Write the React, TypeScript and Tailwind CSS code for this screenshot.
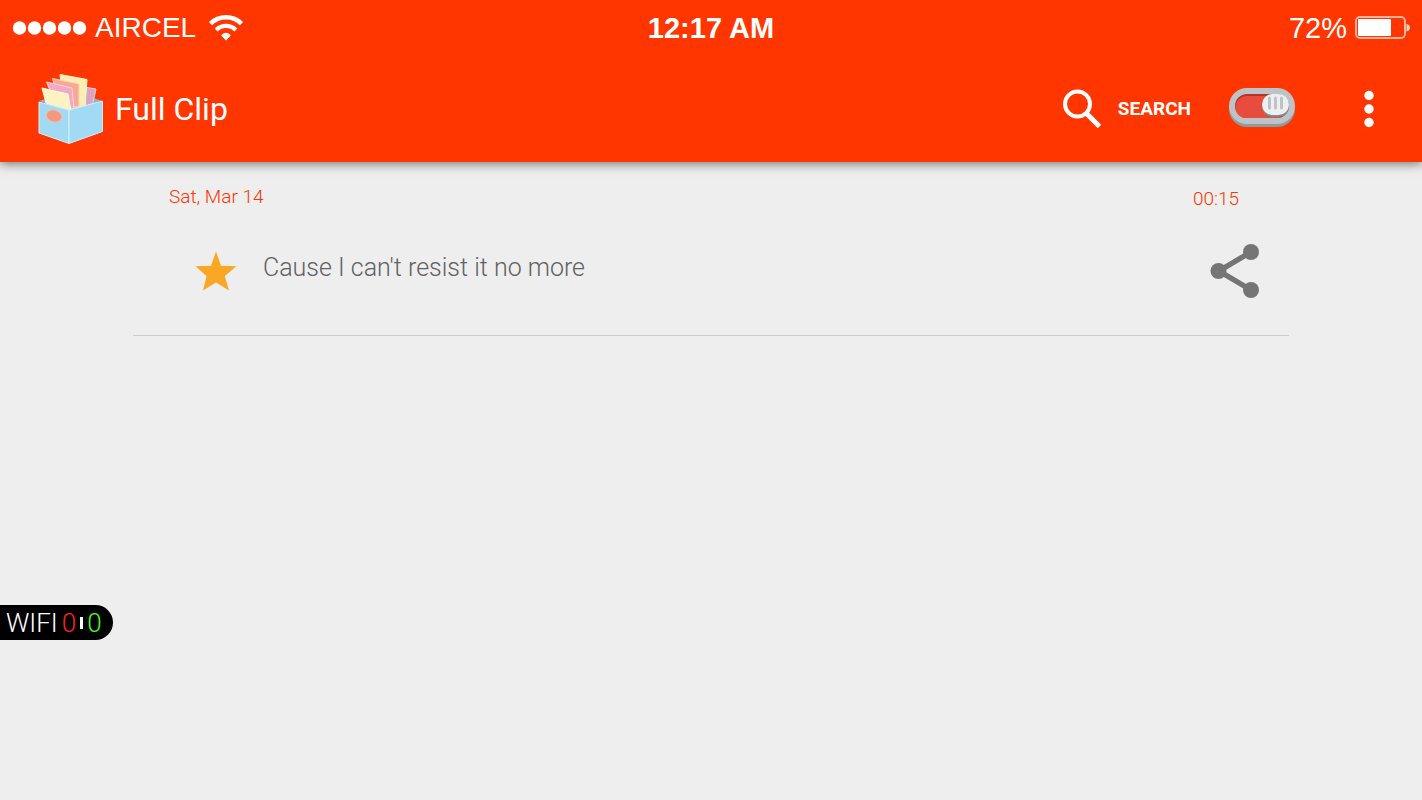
import React from 'react';

const clips = [
  { id: 1, date: 'Sat, Mar 14', time: '00:15', text: "Cause I can't resist it no more" },
];

const WifiIcon = () => (
  <svg width="36" height="28" viewBox="0 0 36 28" fill="none" aria-hidden="true">
    <path d="M2.500 9.600C11 1.200 25 1.200 33.500 9.600" stroke="#fff" strokeWidth="4.600" />
    <path d="M8.200 16C13.600 10.600 22.400 10.600 27.800 16" stroke="#fff" strokeWidth="4.200" />
    <path d="M18 26.500L13.200 21.500C15.600 17.800 20.400 17.800 22.800 21.500Z" fill="#fff" />
  </svg>
);

const BatteryIcon = () => (
  <svg width="55" height="24" viewBox="0 0 55 24" aria-hidden="true">
    <rect x="1" y="1" width="49" height="21" rx="4" fill="none" stroke="#ffb39e" strokeWidth="2" />
    <rect x="3" y="3" width="33" height="17" rx="1" fill="#fff" />
    <path d="M51.500 8C56 8.500 56 15 51.500 15.500Z" fill="#ffd9ce" />
  </svg>
);

const BoxLogo = () => (
  <svg width="66" height="72" viewBox="0 0 66 72" aria-hidden="true" strokeLinejoin="round">
    <path d="M1 28L36 18L64 28L31 37Z" fill="#7fb9cf" />
    <path d="M46 14L58 16L54 34L44 36Z" fill="#dba3bf" stroke="#f0cfdc" strokeWidth="1" />
    <path d="M22 1.500L49 6.500L47 34L26 34Z" fill="#fbeeae" stroke="#fff8dc" strokeWidth="1" />
    <path d="M14.500 5.500L41 11L41 34L22 32Z" fill="#f6ab91" stroke="#fbd3c2" strokeWidth="1" />
    <path d="M8.500 9L34 15L36 36L18 32Z" fill="#f3a9c6" stroke="#fbd5e2" strokeWidth="1" />
    <path d="M4 15L30 21L33 38L8 30Z" fill="#fcf3c0" stroke="#fffbe6" strokeWidth="1" />
    <path d="M1 29L31 37V70.500L1 60Z" fill="#a2daf3" stroke="#d6f0fb" strokeWidth="1" />
    <path d="M31 37L64.500 28V58.500L31 70.500Z" fill="#a2daf3" stroke="#d6f0fb" strokeWidth="1" />
    <ellipse cx="16" cy="43" rx="8" ry="6" transform="rotate(14 16 43)" fill="#f29a80" stroke="#f7bda9" strokeWidth="1" />
  </svg>
);

const SearchIcon = () => (
  <svg width="40" height="40" viewBox="0 0 40 40" fill="none" stroke="#fff" aria-hidden="true">
    <circle cx="15.500" cy="15" r="12.500" strokeWidth="4" />
    <path d="M24.500 24.500L37.500 37.500" strokeWidth="5" />
  </svg>
);

const ToggleSwitch = () => (
  <svg width="66" height="40" viewBox="0 0 66 40" aria-hidden="true">
    <rect x="0" y="2" width="66" height="37" rx="18" fill="#8d9c9f" />
    <rect x="0" y="0" width="66" height="36" rx="18" fill="#bdc3c7" />
    <rect x="6" y="6" width="54" height="24" rx="12" fill="#b83226" />
    <path d="M18 8H50V30H18C10 30 6.500 25 6.500 19C7 12 12 8 18 8Z" fill="#e74c3c" />
    <rect x="33" y="8" width="27" height="21" rx="10.500" fill="#7f8c8d" />
    <rect x="33" y="6" width="27" height="21" rx="10.500" fill="#ecf0f1" />
    <path d="M40.500 10V20M46.500 10V20M52.500 10V20" stroke="#bdc3c7" strokeWidth="3" strokeLinecap="round" />
  </svg>
);

const DotsIcon = () => (
  <svg width="10" height="38" viewBox="0 0 10 38" fill="#fff" aria-hidden="true">
    <circle cx="5" cy="5.500" r="4.700" />
    <circle cx="5" cy="19" r="4.700" />
    <circle cx="5" cy="32.500" r="4.700" />
  </svg>
);

const StarIcon = () => (
  <svg width="42" height="40" viewBox="0 0 42 40" fill="#f9a825" aria-hidden="true">
    <path d="M21 0.500L26 14.800L41.500 15.200L29.800 25L34 39.500L21 31.500L8 39.500L11.500 25L0.500 15.200L16 14.800Z" />
  </svg>
);

const ShareIcon = () => (
  <svg width="50" height="54" viewBox="0 0 50 54" fill="#757575" aria-hidden="true">
    <path d="M41 8L9 27L41 46" fill="none" stroke="#757575" strokeWidth="5.500" />
    <circle cx="41" cy="8" r="8" />
    <circle cx="8.500" cy="27" r="8" />
    <circle cx="41" cy="46" r="8" />
  </svg>
);

const App = () => {
  return (
    <div className="min-h-screen bg-[#eeeeee] font-['Roboto',sans-serif]">
      {/* Header */}
      <header className="bg-[#ff3600] text-white shadow-[0_2px_10px_rgba(0,0,0,0.5)]">
        {/* Status bar */}
        <div className="grid grid-cols-3 items-center h-14 px-3 font-['Liberation_Sans',sans-serif] text-[29px] leading-8">
          <div className="flex items-center text-[28px]">
            <svg width="75" height="16" viewBox="0 0 75 16" fill="#fff" aria-hidden="true">
              <circle cx="7.500" cy="8" r="6.700" />
              <circle cx="22.500" cy="8" r="6.700" />
              <circle cx="37.500" cy="8" r="6.700" />
              <circle cx="52.500" cy="8" r="6.700" />
              <circle cx="67.500" cy="8" r="6.700" />
            </svg>
            <span className="ml-2 mr-3">AIRCEL</span>
            <WifiIcon />
          </div>
          <div className="text-center font-bold">12:17 AM</div>
          <div className="flex items-center justify-end gap-2">
            <span>72%</span>
            <BatteryIcon />
          </div>
        </div>

        {/* App bar */}
        <div className="flex items-center justify-between h-[106px] pl-[38px] pr-12">
          <div className="flex items-center gap-[11px]">
            <BoxLogo />
            <h1 className="text-[32px] leading-10">Full Clip</h1>
          </div>
          <div className="flex items-center">
            <button type="button" className="flex items-center gap-4 text-[19px] leading-6 font-bold">
              <SearchIcon />
              SEARCH
            </button>
            <label className="block ml-[38px] pb-[2px] cursor-pointer">
              <input type="checkbox" defaultChecked aria-label="Clipboard service" className="sr-only" />
              <ToggleSwitch />
            </label>
            <button type="button" aria-label="More options" className="ml-[69px]">
              <DotsIcon />
            </button>
          </div>
        </div>
      </header>

      {/* Clip list */}
      <main className="w-[81.3%] mx-auto">
        <ul>
          {clips.map((clip) => (
            <li key={clip.id} className="pt-[19px] pb-[37px] border-b border-[#cccccc]">
              <div className="flex items-center justify-between pl-9 pr-[50px] text-[19px] leading-7 font-light text-[#ff3600]">
                <span>{clip.date}</span>
                <time className="pt-1">{clip.time}</time>
              </div>
              <div className="flex items-center pt-[31px] pl-[62px] pr-[29px]">
                <button type="button" aria-label="Favourite">
                  <StarIcon />
                </button>
                <p className="flex-1 ml-[26px] pb-[6px] text-[25px] leading-8 font-light text-[#616161]">{clip.text}</p>
                <button type="button" aria-label="Share">
                  <ShareIcon />
                </button>
              </div>
            </li>
          ))}
        </ul>
      </main>

      {/* Floating network meter */}
      <div className="absolute left-0 top-[605px] flex items-center h-[35px] w-[113px] pl-[6px] rounded-r-full bg-black text-[26px] leading-8 font-light text-white">
        <span>WIFI</span>
        <span className="ml-1 text-[#ff2020]">0</span>
        <span className="mx-1 h-3 w-[3px] bg-white" />
        <span className="text-[#4cff1a]">0</span>
      </div>
    </div>
  );
};

export default App;
